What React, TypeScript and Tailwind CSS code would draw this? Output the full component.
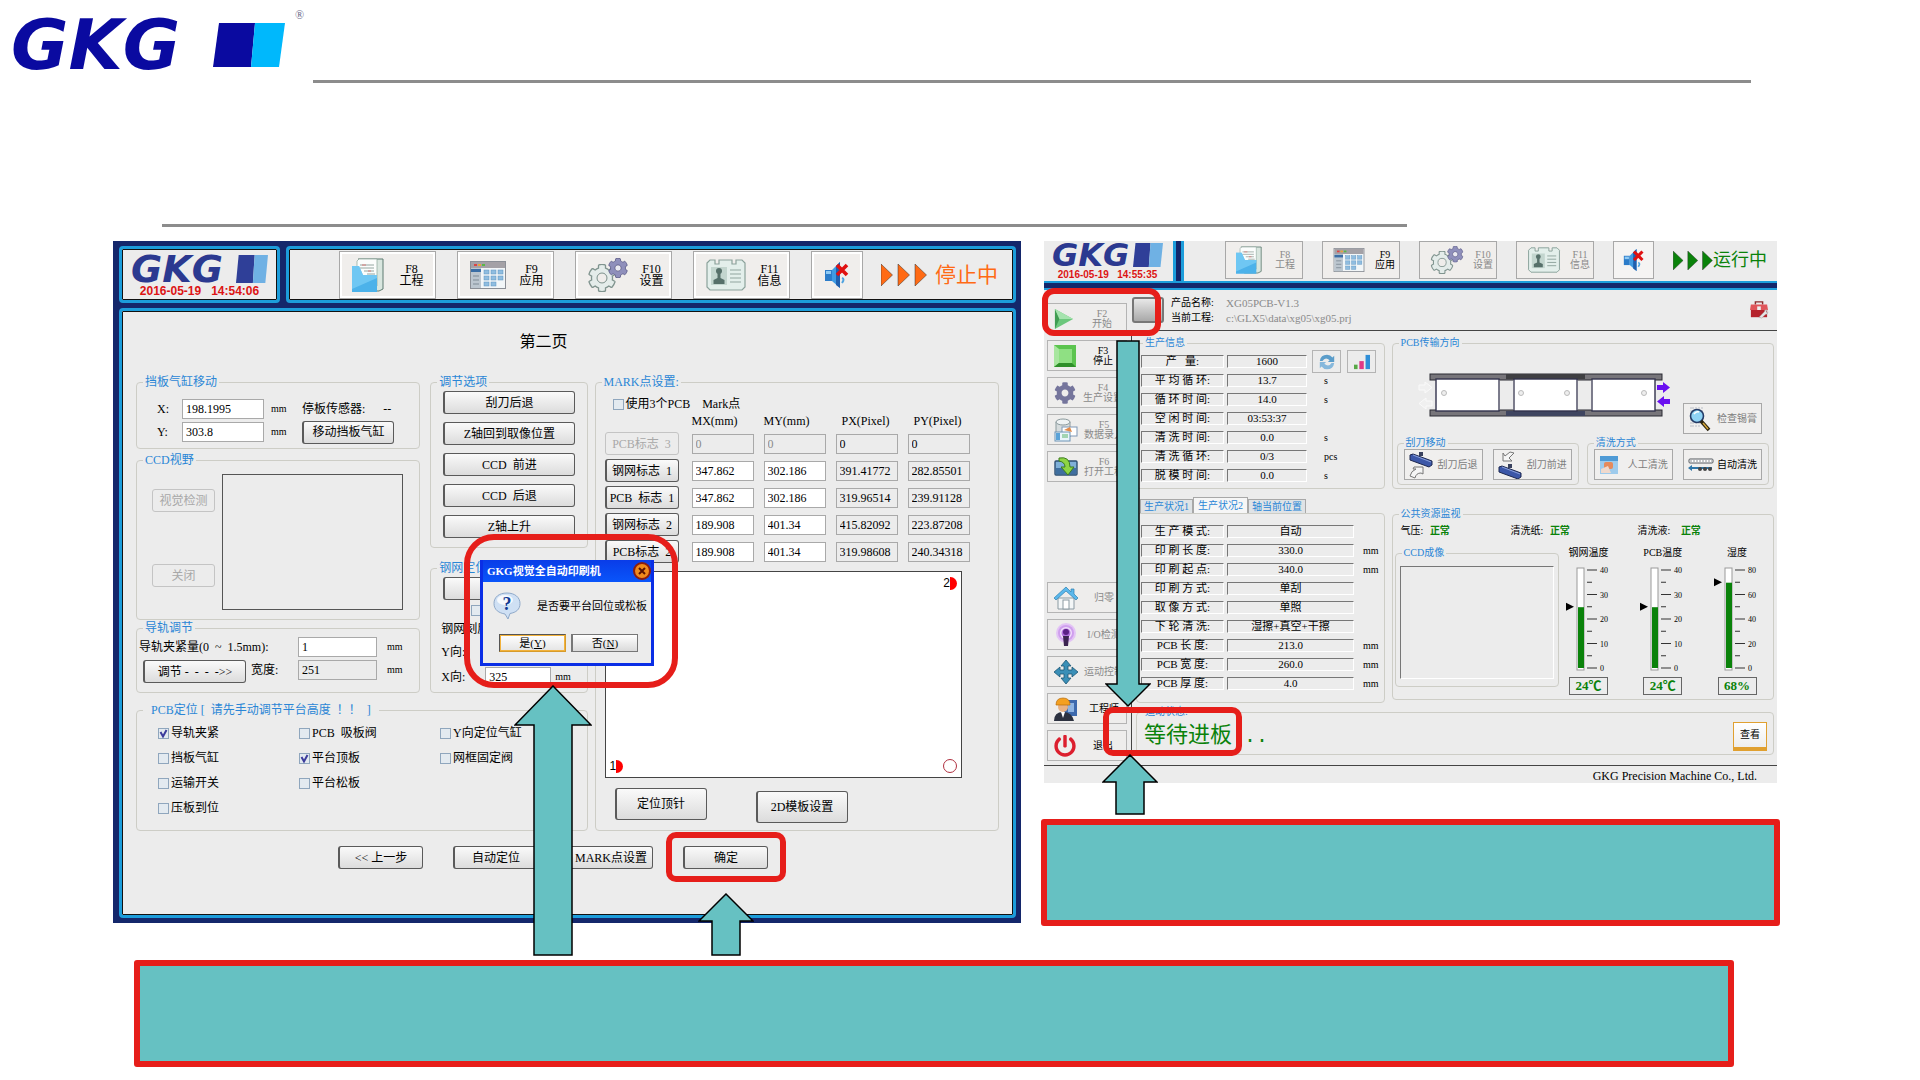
import { useState } from "react"
import type { ReactNode } from "react"
import { FaCog, FaPowerOff } from "react-icons/fa"

const serif = "font-['Liberation_Serif','Noto_Sans_CJK_SC',serif]"

/* ---------- icons ---------- */

function FolderIcon({ className }: { className: string }) {
  return (
    <svg viewBox="0 0 32 34" className={className}>
      <path d="M6 1h25v30l-4 2H10V5z" fill="#d9e6df" stroke="#5c7a70" />
      <path d="M5 3l2-2h18v27H5z" fill="#fbfdfc" stroke="#8aa39a" strokeWidth=".7" />
      <path d="M8 7h14M8 10h14M12 13h10M15 16h8M15 19h8" stroke="#7c8f8a" strokeWidth=".8" />
      <path d="M10 7h4M16 13h3" stroke="#d66" strokeWidth=".8" />
      <path d="M0 8h7l4 9h14v17H0z" fill="#4cb2ea" />
      <path d="M0 8h7l4 9h14v3L0 31z" fill="#7fd0f7" opacity=".7" />
    </svg>
  )
}

function WindowIcon({ className }: { className: string }) {
  return (
    <svg viewBox="0 0 36 28" className={className}>
      <rect x=".5" y=".5" width="35" height="27" fill="#f2f6f8" stroke="#8b8f96" />
      <rect x="1" y="1" width="34" height="6" fill="#a4a1a6" />
      <path d="M4 4h3" stroke="#d44" strokeWidth="2" />
      <path d="M8 4h3" stroke="#e8a33c" strokeWidth="2" />
      <path d="M12 4h3" stroke="#58b947" strokeWidth="2" />
      <rect x="1" y="7" width="10" height="20" fill="#bcc6cf" />
      <rect x="1" y="8" width="10" height="3" fill="#3b6ea5" />
      <path d="M3 15h6M3 19h6M3 23h6" stroke="#7f8b96" />
      {[14, 21, 28].map((x) =>
        [9, 15, 21].map((y) =>
          x === 28 && y === 21 ? null : (
            <rect key={`${x}-${y}`} x={x} y={y} width="5" height="4" fill="#8fbde0" stroke="#5d93bf" strokeWidth=".5" />
          )
        )
      )}
    </svg>
  )
}

function GearsIcon({ className }: { className: string }) {
  return (
    <svg viewBox="0 0 40 34" className={className}>
      <FaCog x="0" y="6" size={28} fill="#e4ecea" stroke="#80948f" strokeWidth="24" />
      <circle cx="14" cy="20" r="5" fill="#efedeb" stroke="#80948f" />
      <FaCog x="20" y="0" size={20} fill="#8f8fbb" stroke="#5b5b86" strokeWidth="20" />
      <circle cx="30" cy="10" r="2" fill="#e8e8f4" />
    </svg>
  )
}

function CardIcon({ className }: { className: string }) {
  return (
    <svg viewBox="0 0 40 32" className={className}>
      <path d="M1 4l3-3h5v4h4V1h13v4h4V1h6l3 3v24l-3 3H4l-3-3z" fill="#e3efeb" stroke="#8ba29b" strokeWidth="1.2" />
      <rect x="5" y="8" width="16" height="18" fill="#c3d6cf" />
      <circle cx="13" cy="12" r="3" fill="#56706a" />
      <path d="M11.500 14h3v5l4 2v4h-11v-4l4-2z" fill="#56706a" />
      <path d="M24 11h11M24 15h11M24 19h11M24 23h11" stroke="#91a69f" strokeWidth="1.2" />
    </svg>
  )
}

function MuteIcon({ className }: { className: string }) {
  return (
    <svg viewBox="0 0 26 28" className={className}>
      <path d="M1 9h7v11H1z" fill="#2c7cc9" />
      <path d="M8 9l8-8v26l-8-7z" fill="#3f9be3" />
      <path d="M12 5l4-4v26l-4-3z" fill="#1f5fae" />
      <path d="M2 10h5v3H2z" fill="#8fcaf4" />
      <path d="M18 17q3 1 0 5" stroke="#4fa3e0" strokeWidth="2" fill="none" />
      <path d="M13 4l10 10M23 4L13 14" stroke="#e01010" strokeWidth="3.600" />
    </svg>
  )
}

function PlayIcon() {
  return (
    <svg viewBox="0 0 22 24" className="h-6 w-5">
      <path d="M1 1l20 11L1 23z" fill="#6cc77c" />
      <path d="M1 1l5 11-5 11z" fill="#3f9c52" />
      <path d="M1 1l20 11H6z" fill="#a5e3ae" />
    </svg>
  )
}

function StopIcon() {
  return (
    <svg viewBox="0 0 22 22" className="size-[22px]">
      <rect width="22" height="22" fill="#5cc44f" />
      <path d="M0 0l5 4v14l-5 4z" fill="#a8e69f" />
      <path d="M0 22l5-4h13l4 4z" fill="#2f8f2a" />
      <path d="M5 4h13v14H5z" fill="#8fe083" />
    </svg>
  )
}

function DataIcon() {
  return (
    <svg viewBox="0 0 24 24" className="size-6">
      <path d="M2 4v15q6 4 14 0V4z" fill="#d6dcdd" stroke="#8b9a9d" />
      <ellipse cx="9" cy="4" rx="7" ry="3" fill="#eef2f3" stroke="#8b9a9d" />
      <rect x="8" y="9" width="15" height="9" fill="#fff" stroke="#7f97b5" />
      <rect x="1" y="14" width="15" height="9" fill="#eaf5fb" stroke="#6d94b6" />
      <rect x="2" y="15" width="4" height="7" fill="#5ba3d8" />
      <path d="M10 12l6-3 2 5z" fill="#e08a4a" />
      <path d="M8 17h6M8 19h6" stroke="#5bb36a" />
    </svg>
  )
}

function OpenIcon() {
  return (
    <svg viewBox="0 0 24 22" className="h-[22px] w-6">
      <rect x="1" y="5" width="22" height="14" rx="1" fill="#7fb0d8" stroke="#2d4f73" strokeWidth="1.4" />
      <path d="M2 12h20v6H2z" fill="#3f6fa0" />
      <path d="M5 2q11-2 11 9h4l-6 8-7-8h4q0-5-6-6z" fill="#8ed544" stroke="#3c7d1c" />
    </svg>
  )
}

function HomeIcon() {
  return (
    <svg viewBox="0 0 24 24" className="size-6">
      <path d="M4 12h16v11H4z" fill="#f3f6f7" stroke="#8b9aa2" />
      <path d="M12 1L0 12l2 2L12 5l10 9 2-2-4-4V3h-3v3z" fill="#5bb8ec" stroke="#2b7fb2" strokeWidth=".7" />
      <rect x="9" y="14" width="6" height="9" fill="#fff" stroke="#8b9aa2" />
    </svg>
  )
}

function IoIcon() {
  return (
    <svg viewBox="0 0 24 24" className="size-6">
      <circle cx="12" cy="10" r="10" fill="#e3c4f5" />
      <circle cx="12" cy="10" r="8" fill="#cf9fee" />
      <circle cx="12" cy="10" r="6" fill="#f0e0fa" />
      <circle cx="12" cy="10" r="4.500" fill="#b06fdc" />
      <circle cx="12" cy="9" r="3" fill="#5b1f86" />
      <path d="M9 13h6l-1 10h-4z" fill="#3b2350" />
    </svg>
  )
}

function MoveIcon() {
  return (
    <svg viewBox="0 0 24 24" className="size-6">
      <path
        d="M12 0l5 6h-3v4h4V7l6 5-6 5v-3h-4v4h3l-5 6-5-6h3v-4H6v3l-6-5 6-5v3h4V6H7z"
        fill="#3a8fb7"
        stroke="#1c5673"
        strokeWidth=".8"
      />
    </svg>
  )
}

function EngineerIcon() {
  return (
    <svg viewBox="0 0 24 24" className="size-6">
      <rect x="10" y="3" width="13" height="16" fill="#3d69ad" />
      <path d="M14 6h6v9h-6z" fill="#8eb4e2" />
      <circle cx="9" cy="10" r="5" fill="#e9b284" />
      <path d="M2 8q0-7 7-7t7 7z" fill="#f4a020" stroke="#b86c0a" strokeWidth=".7" />
      <path d="M0 24q0-9 9-9t11 9z" fill="#2c3140" />
      <path d="M7 15l2 6 2-6z" fill="#fff" />
    </svg>
  )
}

function RefreshIcon() {
  return (
    <svg viewBox="0 0 20 20" className="size-[18px]">
      <path d="M2 9q1-7 8-7 4 0 6 3l2-2v7h-7l2-2q-5-4-8 1z" fill="#5b9dca" />
      <path d="M18 11q-1 7-8 7-4 0-6-3l-2 2v-7h7l-2 2q5 4 8-1z" fill="#86b8dc" />
    </svg>
  )
}

function ChartIcon() {
  return (
    <svg viewBox="0 0 20 18" className="h-4 w-[18px]">
      <rect x="1" y="12" width="4" height="5" fill="#58a846" />
      <rect x="7" y="8" width="5" height="9" fill="#df3a86" />
      <rect x="14" y="1" width="5" height="16" fill="#2f8fd8" />
    </svg>
  )
}

function MagnifierIcon() {
  return (
    <svg viewBox="0 0 24 26" className="h-[26px] w-6">
      <path d="M3 1v20M5 1v20M8 1v20M11 1v20M14 1v12" stroke="#b9bec6" strokeDasharray="2 1" />
      <circle cx="9" cy="10" r="6.500" fill="#8fd3f5" stroke="#243b66" strokeWidth="1.600" />
      <path d="M6 8q2-3 5-2" stroke="#fff" strokeWidth="1.600" fill="none" />
      <path d="M13 15l8 9" stroke="#2b230f" strokeWidth="3.600" />
      <path d="M15 17l5 6" stroke="#d8a93a" strokeWidth="1.400" />
    </svg>
  )
}

function BladeIcon({ forward }: { forward?: boolean }) {
  return (
    <svg viewBox="0 0 24 28" className="h-7 w-6 shrink-0">
      <g transform={forward ? "translate(0 12)" : undefined}>
        <path d="M1 4l3-1 19 7v4l-3 2L1 9z" fill="#3c57a8" stroke="#1d2850" />
        <path d="M4 4l18 7" stroke="#8aa0dc" />
        <path d="M10 1h4v4h-4z" fill="#39415e" />
      </g>
      <path
        d={forward ? "M16 2l-5 5 3 3H5V2l2 3 5-4z" : "M1 25q1-5 6-7H4l1-2h9v7l-2-1q-5 0-6 5z"}
        fill="#f5f5f5"
        stroke="#777"
      />
    </svg>
  )
}

function WipeIcon() {
  return (
    <svg viewBox="0 0 20 20" className="size-5 shrink-0">
      <rect x="1" y="1" width="18" height="18" fill="#9ecbec" />
      <path d="M1 1h18v5H1z" fill="#4f9bd6" />
      <rect x="5" y="7" width="9" height="7" rx="2" fill="#e58a5c" />
      <path d="M2 14l7-3 3 7H2z" fill="#f0d9cc" />
    </svg>
  )
}

function AutoCleanIcon() {
  return (
    <svg viewBox="0 0 26 14" className="h-[14px] w-[26px] shrink-0">
      <rect x="1" y="1" width="24" height="4" rx="1" fill="#fff" stroke="#55595f" />
      <path d="M2 3h22" stroke="#8d9095" strokeDasharray="2 1" />
      <path d="M0 10l4-3v2h20v2H4v2z" fill="#2f76a8" />
      <circle cx="12" cy="11" r="2" fill="#444" />
      <circle cx="17" cy="11" r="2" fill="#444" />
      <circle cx="22" cy="11" r="2" fill="#444" />
    </svg>
  )
}

function ToolboxIcon() {
  return (
    <svg viewBox="0 0 20 20" className="h-[18px] w-5">
      <path d="M6 4V1h8v3" fill="none" stroke="#8b2b2b" strokeWidth="1.600" />
      <path d="M1 4h18l1 6H0z" fill="#e0555a" />
      <path d="M1 10h18v8H1z" fill="#b5232c" />
      <rect x="8" y="6" width="4" height="4" fill="#eee" />
      <path d="M10 18l6-6q0-3 3-2l-1 2 1 1 1-1q0 3-3 3l-4 4z" fill="#e6e6e6" stroke="#999" strokeWidth=".5" />
    </svg>
  )
}

function QuestionIcon() {
  return (
    <svg viewBox="0 0 28 28" className="size-7">
      <path d="M14 1C6 1 1 5 1 11.500S6 21 12 22l3 5 2-5.500c6-1 10-4 10-10S22 1 14 1z" fill="#cfe0f4" stroke="#8fa9c9" />
      <ellipse cx="12" cy="8" rx="8" ry="5" fill="#fff" opacity=".8" />
      <text x="14" y="18" textAnchor="middle" fontSize="18" fontWeight="700" fontFamily="Liberation Serif" fill="#123a93">
        ?
      </text>
    </svg>
  )
}

/* ---------- shared pieces ---------- */

function Brand({ size }: { size: "lg" | "md" | "sm" }) {
  const text = { lg: "text-[70px] leading-[46px]", md: "text-[38px] leading-[30px]", sm: "text-[32px] leading-[28px]" }[size]
  const mark = { lg: "h-11 w-[72px]", md: "h-7 w-8", sm: "h-6 w-[30px]" }[size]
  const color = size === "lg" ? "text-[#0a0aa0]" : "text-[#2b3990]"
  return (
    <div className={`flex items-center justify-between ${color}`}>
      <span className={`font-['DejaVu_Sans',sans-serif] font-bold italic ${text}`}>GKG</span>
      <svg viewBox="0 0 72 44" preserveAspectRatio="none" className={mark}>
        <path d="M6 0h36l-4 44H0z" fill={size === "lg" ? "#0a0aa0" : "#2f3f98"} />
        <path d="M42 0h30l-6 44H38z" fill={size === "lg" ? "#00b8fc" : "#6fb1e4"} />
      </svg>
    </div>
  )
}

function Group({ title, className = "", body = "", children }: { title: string; className?: string; body?: string; children: ReactNode }) {
  return (
    <fieldset className={`min-w-0 rounded-[4px] border border-[#cdcdc6] ${className}`}>
      <legend className="ml-1.5 px-0.5 whitespace-pre text-[#2a86d6]">{title}</legend>
      <div className={body}>{children}</div>
    </fieldset>
  )
}

function PushButton({ className = "", disabled, children }: { className?: string; disabled?: boolean; children?: ReactNode }) {
  const look = disabled
    ? "border-[#c4c4c4] text-[#a8a8a8]"
    : "border-[#5a5a5a] border-l-2 bg-linear-to-b from-[#fafafa] to-[#dcdcdc] text-black"
  return (
    <button
      disabled={disabled}
      className={`flex items-center justify-center rounded-[3px] border whitespace-pre ${look} ${className}`}
    >
      {children}
    </button>
  )
}

function Field({ label, value, className = "", readOnly }: { label: string; value: string; className?: string; readOnly?: boolean }) {
  return (
    <input
      aria-label={label}
      defaultValue={value}
      readOnly={readOnly}
      className={`h-5 min-w-0 border border-[#a9a9a9] px-[3px] ${readOnly ? "bg-[#ececec]" : "bg-white"} ${className}`}
    />
  )
}

function Check({ label, on }: { label: string; on?: boolean }) {
  return (
    <label className="flex items-center gap-0.5 whitespace-pre">
      <span className="relative flex size-[11px]">
        <input
          type="checkbox"
          defaultChecked={on}
          className="peer size-[11px] appearance-none border border-[#8fa6bd] bg-[#e3eaf0]"
        />
        <svg viewBox="0 0 11 11" className="pointer-events-none absolute inset-0 hidden peer-checked:block">
          <path d="M2.500 4l2.500 4.500L8.500 2" fill="none" stroke="#3c3c9c" strokeWidth="2" />
        </svg>
      </span>
      {label}
    </label>
  )
}

function ToolButton({ fkey, label, small, dim, children }: { fkey: string; label: string; small?: boolean; dim?: boolean; children: ReactNode }) {
  return (
    <button
      className={`flex shrink-0 items-center bg-[#f0eeec] ${
        small
          ? "h-[38px] w-[78px] border border-[#a8a8a8] pl-2.5 text-[10px] leading-[10px]"
          : "h-[46px] w-[95px] border-2 border-white pl-2.5 text-[12px] leading-[12px] outline outline-[#a8a8a8]"
      } ${dim ? "text-[#8a8a8a]" : "text-black"}`}
    >
      {children}
      <span className="flex-1 pl-1.5 text-center">
        {fkey}
        <br />
        {label}
      </span>
    </button>
  )
}

function Runner({ color, className }: { color: string; className: string }) {
  return (
    <svg viewBox="0 0 46 22" className={className}>
      {[0, 17, 34].map((x) => (
        <path key={x} d={`M${x} 0l11.500 11L${x} 22z`} fill={color} stroke="#333" strokeWidth=".5" />
      ))}
    </svg>
  )
}

function UpArrow({ className, width, height, head, inset }: { className: string; width: number; height: number; head: number; inset: number }) {
  return (
    <svg width={width} height={height} className={`absolute ${className}`}>
      <path
        d={`M${width / 2} 1L${width - 1} ${head}H${width - inset}V${height - 1}H${inset}V${head}H1z`}
        fill="#66c1c2"
        stroke="#000"
        strokeWidth="1.500"
      />
    </svg>
  )
}

/* ---------- left screen ---------- */

const frame = "rounded-[4px] border-3 border-[#1c9ddb] bg-[#ececec] outline-1 -outline-offset-4 outline-[#111]"

const marks = [
  { name: "PCB标志  3", values: ["0", "0", "0", "0"], off: true },
  { name: "钢网标志  1", values: ["347.862", "302.186", "391.41772", "282.85501"] },
  { name: "PCB  标志  1", values: ["347.862", "302.186", "319.96514", "239.91128"] },
  { name: "钢网标志  2", values: ["189.908", "401.34", "415.82092", "223.87208"] },
  { name: "PCB标志  2", values: ["189.908", "401.34", "319.98608", "240.34318"] },
]

function MarkGroup() {
  return (
    <Group title="MARK点设置:" body="pb-[7px] pl-[9px]">
      <div className="pt-2 pl-2">
        <Check label="使用3个PCB    Mark点" />
      </div>
      <div className="mt-[3px] grid grid-cols-[77px_62px_62px_62px_62px] gap-x-2.5 gap-y-1">
        <div className="contents">
          <span />
          <span>MX(mm)</span>
          <span>MY(mm)</span>
          <span className="pl-1.5">PX(Pixel)</span>
          <span className="pl-1.5">PY(Pixel)</span>
        </div>
        {marks.map((m) => (
          <div key={m.name} className="contents">
            <PushButton disabled={m.off} className="h-[23px] w-[74px]">
              {m.name}
            </PushButton>
            {m.values.map((v, i) => (
              <Field
                key={i}
                label={`${m.name} ${i + 1}`}
                value={v}
                readOnly={m.off || i > 1}
                className={`mt-0.5 w-[62px] ${m.off && i < 2 ? "text-[#8a8a8a]" : ""}`}
              />
            ))}
          </div>
        ))}
      </div>
      <div className="mt-2 mr-9 flex h-[207px] flex-col justify-between border border-[#444] bg-white px-1 py-1 font-['Liberation_Sans',sans-serif]">
        <div className="flex items-center justify-end">
          2
          <span className="h-[13px] w-[7px] rounded-r-full bg-[#ff0000]" />
        </div>
        <div className="flex items-center">
          1
          <span className="h-[13px] w-[7px] rounded-r-full bg-[#ff0000]" />
          <span className="ml-auto size-[14px] rounded-full border border-[#b03040]" />
        </div>
      </div>
      <div className="mt-2.5 flex items-end gap-[49px] pl-2.5">
        <PushButton className="mb-[3px] h-8 w-[92px]">定位顶针</PushButton>
        <PushButton className="h-8 w-[92px]">2D模板设置</PushButton>
      </div>
    </Group>
  )
}

function ConfirmDialog() {
  return (
    <div role="dialog" aria-label="GKG视觉全自动印刷机" className="absolute top-[319px] left-[367px] w-[174px] border-[3px] border-t-0 border-[#0a2ee6] bg-[#ececec] text-[11px]">
      <div className="flex h-[22px] items-center justify-between bg-linear-to-b from-[#0a3ce8] to-[#0a55fa] pl-1 font-bold text-white">
        GKG视觉全自动印刷机
        <button aria-label="关闭" className="flex size-[18px] items-center justify-center rounded-full border-2 border-[#8a1d10] bg-[#f08a1c]">
          <svg viewBox="0 0 8 8" className="size-2">
            <path d="M1 1l6 6M7 1L1 7" stroke="#5a1200" strokeWidth="2" />
          </svg>
        </button>
      </div>
      <div className="flex items-center justify-between pt-2.5 pr-1 pl-2.5">
        <QuestionIcon />
        <span className="whitespace-nowrap">是否要平台回位或松板</span>
      </div>
      <div className="mt-3.5 mb-[11px] flex gap-[5px] pl-4">
        <button className="h-[18px] w-[67px] border border-t-[#555] border-l-[#555] border-[#d79b2b] bg-linear-to-b from-white to-[#e4e4e4] leading-none outline-1 -outline-offset-2 outline-[#f2b23c]">
          是(<u>Y</u>)
        </button>
        <button className="h-[18px] w-[67px] border border-l-2 border-[#777] bg-linear-to-b from-white to-[#dadada] leading-none">
          否(<u>N</u>)
        </button>
      </div>
    </div>
  )
}

function SetupScreen() {
  return (
    <section className="relative bg-[#14276b] pt-[5px] pr-[5px] pb-[5px] pl-1.5 text-[12px] leading-[14px]">
      <div className="flex gap-1.5">
        <div className={`h-[57px] w-[161px] px-[9px] pt-[5px] ${frame}`}>
          <Brand size="md" />
          <p className="text-center font-['Liberation_Sans',sans-serif] text-[12px] leading-[14px] font-bold whitespace-pre text-[#dc1414]">
            2016-05-19   14:54:06
          </p>
        </div>
        <div className={`flex h-[57px] flex-1 items-center gap-[23px] pl-[51px] ${frame}`}>
          <ToolButton fkey="F8" label="工程"><FolderIcon className="h-[34px] w-8" /></ToolButton>
          <ToolButton fkey="F9" label="应用"><WindowIcon className="h-7 w-9" /></ToolButton>
          <ToolButton fkey="F10" label="设置"><GearsIcon className="h-[34px] w-10" /></ToolButton>
          <ToolButton fkey="F11" label="信息"><CardIcon className="h-8 w-10" /></ToolButton>
          <button aria-label="静音" className="flex h-[46px] w-[50px] shrink-0 items-center justify-center border-2 border-white bg-[#f0eeec] outline outline-[#a8a8a8]">
            <MuteIcon className="h-7 w-[26px]" />
          </button>
          <div className="-ml-1 flex items-center gap-2 text-[21px] text-[#ff6a14]">
            <Runner color="#ff6a14" className="h-[22px] w-[46px]" />
            停止中
          </div>
        </div>
      </div>

      <div className={`mt-[5px] pr-[14px] pb-[46px] pl-[14px] ${frame}`}>
        <h1 className="mt-[23px] mb-[25px] pr-12 text-center text-[16px] leading-4">第二页</h1>
        <div className="grid grid-cols-[451fr_404fr] gap-[7px]">
          <div>
            <div className="grid grid-cols-[284fr_157fr] gap-2.5">
              <div>
                <Group title="挡板气缸移动" body="pt-2.5 pb-1.5">
                  <div className="flex items-center">
                    <span className="w-[45px] pl-5">X:</span>
                    <Field label="X" value="198.1995" className="w-[82px]" />
                    <span className="w-[38px] pl-[7px] text-[10px]">mm</span>
                    <span className="whitespace-pre">停板传感器:      --</span>
                  </div>
                  <div className="mt-[3px] flex h-5 items-center">
                    <span className="w-[45px] pl-5">Y:</span>
                    <Field label="Y" value="303.8" className="w-[82px]" />
                    <span className="w-[38px] pl-[7px] text-[10px]">mm</span>
                    <PushButton className="h-[23px] w-[92px]">移动挡板气缸</PushButton>
                  </div>
                </Group>

                <Group title="CCD视野" className="mt-1" body="flex gap-[7px] pt-[7px] pr-4 pb-[9px] pl-[15px]">
                  <div className="flex flex-col gap-[52px] pt-[15px]">
                    <PushButton disabled className="h-[23px] w-[63px]">视觉检测</PushButton>
                    <PushButton disabled className="h-[23px] w-[63px]">关闭</PushButton>
                  </div>
                  <div className="h-[136px] flex-1 border border-[#555]" />
                </Group>

                <Group title="导轨调节" className="mt-px" body="pt-0.5 pb-[9px]">
                  <div className="flex items-center">
                    <span className="w-[161px] pl-0.5 whitespace-pre">导轨夹紧量(0  ~  1.5mm):</span>
                    <Field label="导轨夹紧量" value="1" className="w-[79px]" />
                    <span className="pl-2.5 text-[10px]">mm</span>
                  </div>
                  <div className="mt-[3px] flex items-start pl-1.5">
                    <PushButton className="h-[23px] w-[103px]">调节 -  -  -  -&gt;&gt;</PushButton>
                    <span className="w-[52px] pt-[3px] pl-[5px]">宽度:</span>
                    <Field label="宽度" value="251" readOnly className="w-[79px]" />
                    <span className="pt-[3px] pl-2.5 text-[10px]">mm</span>
                  </div>
                </Group>
              </div>

              <div>
                <Group title="调节选项" body="flex flex-col gap-2 px-3 pt-0.5 pb-[9px]">
                  <PushButton className="h-[23px]">刮刀后退</PushButton>
                  <PushButton className="h-[23px]">Z轴回到取像位置</PushButton>
                  <PushButton className="h-[23px]">CCD  前进</PushButton>
                  <PushButton className="h-[23px]">CCD  后退</PushButton>
                  <PushButton className="h-[23px]">Z轴上升</PushButton>
                </Group>
                <Group title="钢网定位" className="mt-[13px]" body="px-3 pt-0.5 pb-[5px]">
                  <PushButton className="h-[23px] w-full" />
                  <div className="flex h-5 items-center pl-7">
                    <Check label="" />
                  </div>
                  <p className="-ml-0.5 h-[18px] leading-[18px]">钢网刻度</p>
                  <div className="mt-1 -ml-0.5 flex h-5 items-center">
                    <span className="w-11">Y向:</span>
                  </div>
                  <div className="mt-[5px] -ml-0.5 flex items-center">
                    <span className="w-11">X向:</span>
                    <Field label="X向" value="325" className="w-[66px]" />
                    <span className="pl-1 text-[10px]">mm</span>
                  </div>
                </Group>
              </div>
            </div>

            <Group title="  PCB定位 [  请先手动调节平台高度  ！！  ]  " className="mt-2.5" body="pt-1 pb-2.5 pl-[21px]">
              <div className="grid grid-flow-col grid-cols-[141px_141px_1fr] grid-rows-[repeat(4,24px)] gap-y-px">
                <Check label="导轨夹紧" on />
                <Check label="挡板气缸" />
                <Check label="运输开关" />
                <Check label="压板到位" />
                <Check label="PCB  吸板阀" />
                <Check label="平台顶板" on />
                <Check label="平台松板" />
                <span />
                <Check label="Y向定位气缸" />
                <Check label="网框固定阀" />
              </div>
            </Group>
          </div>
          <MarkGroup />
        </div>
        <div className="mt-[15px] flex gap-[30px] pl-[202px]">
          <PushButton className="h-[23px] w-[85px]">&lt;&lt; 上一步</PushButton>
          <PushButton className="h-[23px] w-[85px]">自动定位</PushButton>
          <PushButton className="h-[23px] w-[85px]">MARK点设置</PushButton>
          <PushButton className="h-[23px] w-[85px]">确定</PushButton>
        </div>
      </div>

      <ConfirmDialog />
      <div className="absolute top-[293px] left-[351px] h-[154px] w-[214px] rounded-[30px] border-6 border-[#e61e1a]" />
      <div className="absolute top-[591px] left-[553px] h-[50px] w-[120px] rounded-[10px] border-6 border-[#e61e1a]" />
      <UpArrow className="top-[444px] left-[401px]" width={78} height={271} head={40} inset={20} />
      <UpArrow className="top-[652px] left-[585px]" width={56} height={63} head={28} inset={14} />
    </section>
  )
}

/* ---------- right screen ---------- */

const production = [
  ["产   量:", "1600", ""],
  ["平 均 循 环:", "13.7", "s"],
  ["循 环 时 间:", "14.0", "s"],
  ["空 闲 时 间:", "03:53:37", ""],
  ["清 洗 时 间:", "0.0", "s"],
  ["清 洗 循 环:", "0/3", "pcs"],
  ["脱 模 时 间:", "0.0", "s"],
]

const status = [
  ["生 产 模 式:", "自动", ""],
  ["印 刷 长 度:", "330.0", "mm"],
  ["印 刷 起 点:", "340.0", "mm"],
  ["印 刷 方 式:", "单刮", ""],
  ["取 像 方 式:", "单照", ""],
  ["下 轮 清 洗:", "湿擦+真空+干擦", ""],
  ["PCB 长 度:", "213.0", "mm"],
  ["PCB 宽 度:", "260.0", "mm"],
  ["PCB 厚 度:", "4.0", "mm"],
]

const cell = "h-[13px] border border-t-[#777] border-l-[#777] border-r-white border-b-white p-0 text-center whitespace-pre"

function SideButton({ fkey, label, dim, children }: { fkey?: string; label: string; dim?: boolean; children: ReactNode }) {
  return (
    <button className={`flex h-[31px] w-20 items-center border border-[#b4b4b4] bg-[#eeedec] pl-1.5 text-[10px] leading-[10px] ${dim ? "text-[#8a8a8a]" : "text-black"}`}>
      {children}
      <span className="flex-1 pl-1 text-center whitespace-nowrap">
        {fkey}
        {fkey && <br />}
        {label}
      </span>
    </button>
  )
}

function ActionButton({ label, dim, children }: { label: string; dim?: boolean; children: ReactNode }) {
  return (
    <button className={`flex h-[31px] w-[79px] shrink-0 items-center justify-between border border-[#a8a8a8] bg-[#f0efee] px-1 whitespace-nowrap ${dim ? "text-[#7d7d7d]" : "text-black"}`}>
      {children}
      {label}
    </button>
  )
}

function RailDrawing() {
  return (
    <svg viewBox="0 0 252 44" className="h-11 w-[252px]">
      <rect x="12" y="1" width="232" height="6" fill="#77757a" stroke="#2a2a33" />
      <rect x="12" y="37" width="232" height="6" fill="#77757a" stroke="#2a2a33" />
      <rect x="88" y="1" width="79" height="5" fill="#3f3f42" />
      <rect x="88" y="38" width="79" height="5" fill="#3f4560" />
      {[18, 96, 174].map((x) => (
        <rect key={x} x={x} y="6" width="63" height="32" fill="#fff" stroke="#33334d" strokeWidth="1.400" />
      ))}
      <path d="M81 7v30M96 7v30M159 7v30M174 7v30" stroke="#8c8c98" />
      {[26, 103, 149, 226].map((x) => (
        <circle key={x} cx={x} cy="20" r="2.500" fill="#eee" stroke="#bbb" />
      ))}
      <path d="M239 12h6v-3l7 5.500-7 5.500v-3h-6zM252 26h-6v-3l-7 5.500 7 5.500v-3h6z" fill="#6a10f0" />
      <path d="M1 12h6v-3l7 5.500-7 5.500v-3H1zM14 28H8v-3l-7 5.500 7 5.500v-3h6z" fill="#f0f0f0" stroke="#fafafa" />
    </svg>
  )
}

function Gauge({ title, max, value, pointer, unit }: { title: string; max: number; value: number; pointer: number; unit: string }) {
  const y = (v: number) => 101 - (v / max) * 98
  const ticks = [0, 1, 2, 3, 4, 5, 6, 7, 8]
  return (
    <div className="flex w-[60px] flex-col items-center">
      <span className="whitespace-nowrap">{title}</span>
      <svg viewBox="0 0 48 110" className="mt-2 h-[110px] w-12">
        <rect x="12" y="1" width="7" height="102" fill="#fff" stroke="#999" />
        <rect x="13" y={y(value) - 2} width="6" height={103 - y(value)} fill="#0a820a" />
        <path d={`M1 ${y(pointer) - 4}l8 4-8 4z`} fill="#000" />
        {ticks.map((t) => (
          <g key={t}>
            <path d={`M22 ${y((t * max) / 8)}h${t % 2 ? 5 : 10}`} stroke="#333" />
            {t % 2 === 0 && (
              <text x="35" y={y((t * max) / 8) + 3} fontSize="8" fontFamily="Liberation Serif">
                {(t * max) / 8}
              </text>
            )}
          </g>
        ))}
      </svg>
      <output className="flex h-[18px] w-[39px] items-center justify-center border border-[#666] text-[13px] font-bold text-[#0a820a]">
        {value}
        {unit}
      </output>
    </div>
  )
}

function ReadoutTable({ rows, valueWidth, tools }: { rows: string[][]; valueWidth: string; tools?: ReactNode }) {
  return (
    <table className="border-separate border-spacing-x-[3px] border-spacing-y-[6px]">
      <tbody>
        {rows.map(([name, value, unit]) => (
          <tr key={name} className="text-[11px] leading-[11px]">
            <th className={`w-[83px] font-normal ${cell}`}>{name}</th>
            <td className={`${valueWidth} ${cell}`}>{value}</td>
            <td className="h-[13px] p-0 pl-1.5 text-[10px] leading-[11px]">
              {tools && name === rows[0][0] ? tools : <span className={unit === "mm" ? "" : "pl-2"}>{unit}</span>}
            </td>
          </tr>
        ))}
      </tbody>
    </table>
  )
}

function RunScreen() {
  const [tab, setTab] = useState("生产状况2")

  return (
    <section className="relative bg-[#ececec] text-[10px] leading-3">
      <header className="flex h-10">
        <div className="w-[129px] pr-2.5 pl-2">
          <Brand size="sm" />
          <p className="text-center font-['Liberation_Sans',sans-serif] text-[10px] leading-[11px] font-bold whitespace-pre text-[#dc1414]">
            2016-05-19   14:55:35
          </p>
        </div>
        <div className="w-[11px] border-x-3 border-[#1c9ddb] bg-[#14276b]" />
        <div className="flex flex-1 items-start gap-[19px] pl-[41px]">
          <ToolButton small dim fkey="F8" label="工程"><FolderIcon className="h-7 w-[26px]" /></ToolButton>
          <ToolButton small fkey="F9" label="应用"><WindowIcon className="h-6 w-8" /></ToolButton>
          <ToolButton small dim fkey="F10" label="设置"><GearsIcon className="h-7 w-[34px]" /></ToolButton>
          <ToolButton small dim fkey="F11" label="信息"><CardIcon className="h-[26px] w-[34px]" /></ToolButton>
          <button aria-label="静音" className="flex h-[38px] w-[41px] shrink-0 items-center justify-center border border-[#a8a8a8] bg-[#f5f4f3]">
            <MuteIcon className="h-6 w-[22px]" />
          </button>
          <div className="flex h-[38px] items-center text-[18px] whitespace-nowrap text-[#0a820a]">
            <Runner color="#0a820a" className="h-[19px] w-10" />
            运行中
          </div>
        </div>
      </header>
      <div className="h-[9px] border-y-2 border-[#1c9ddb] bg-[#14276b]" />

      <div className="flex border-b border-[#444]">
        <nav className="flex w-[87px] flex-col justify-between pt-[13px] pb-1 pl-[3px]">
          <div className="flex flex-col gap-1.5">
            <SideButton dim fkey="F2" label="开始"><PlayIcon /></SideButton>
            <SideButton fkey="F3" label="停止"><StopIcon /></SideButton>
            <SideButton dim fkey="F4" label="生产设置"><FaCog size={22} color="#75759c" /></SideButton>
            <SideButton dim fkey="F5" label="数据录入"><DataIcon /></SideButton>
            <SideButton dim fkey="F6" label="打开工程"><OpenIcon /></SideButton>
          </div>
          <div className="flex flex-col gap-1.5">
            <SideButton dim label="归零"><HomeIcon /></SideButton>
            <SideButton dim label="I/O检测"><IoIcon /></SideButton>
            <SideButton dim label="运动控制"><MoveIcon /></SideButton>
            <SideButton label="工程师"><EngineerIcon /></SideButton>
            <SideButton label="退出"><FaPowerOff size={22} color="#dc1f2e" /></SideButton>
          </div>
        </nav>

        <div className="min-w-0 flex-1">
          <div className="flex h-[41px] items-center border-b border-[#444] pr-2 pl-px">
            <button aria-label="停止" className="h-[26px] w-8 rounded-[3px] border-2 border-[#777] bg-linear-to-b from-[#e8e8e8] to-[#a9a9a9]" />
            <dl className="grid flex-1 grid-cols-[55px_1fr] gap-y-[3px] pl-[7px]">
              <dt>产品名称:</dt>
              <dd className="text-[11px] text-[#8a8a8a]">XG05PCB-V1.3</dd>
              <dt>当前工程:</dt>
              <dd className="text-[11px] text-[#8a8a8a]">c:\GLX5\data\xg05\xg05.prj</dd>
            </dl>
            <ToolboxIcon />
          </div>

          <div className="border-l border-[#444] pr-[3px] pb-2.5 pl-1">
            <div className="grid grid-cols-[249fr_383fr] gap-[7px] pt-1.5">
              <div>
                <Group title="生产信息" body="pl-px">
                  <ReadoutTable
                    rows={production}
                    valueWidth="w-[80px]"
                    tools={
                      <div className="-ml-1 flex h-[13px] items-center gap-1.5">
                        <button aria-label="刷新" className="flex h-[23px] w-[29px] items-center justify-center border border-[#b4b4b4]">
                          <RefreshIcon />
                        </button>
                        <button aria-label="统计" className="flex h-[23px] w-[29px] items-center justify-center border border-[#b4b4b4]">
                          <ChartIcon />
                        </button>
                      </div>
                    }
                  />
                </Group>
                <div role="tablist" className="mt-2 flex h-4 items-end pl-1">
                  {["生产状况1", "生产状况2", "轴当前位置"].map((t) => (
                    <button
                      key={t}
                      role="tab"
                      aria-selected={tab === t}
                      onClick={() => setTab(t)}
                      className={`border border-b-0 border-[#a8a8a8] text-[#2a86d6] ${
                        tab === t ? "h-4 bg-[#f6f6f6] px-1" : "h-[14px] bg-[#dfe3e6] px-[3px]"
                      }`}
                    >
                      {t}
                    </button>
                  ))}
                </div>
                <div className="rounded-[4px] border border-[#cdcdc6] pt-[5px] pb-1.5 pl-px">
                  <ReadoutTable rows={status} valueWidth="w-[127px]" />
                </div>
              </div>

              <div>
                <Group title="PCB传输方向" body="px-1 pb-[3px]">
                  <div className="flex h-[88px] items-end justify-between pr-[7px] pb-[3px] pl-[21px]">
                    <div className="mb-[17px]">
                      <RailDrawing />
                    </div>
                    <ActionButton dim label="检查锡膏"><MagnifierIcon /></ActionButton>
                  </div>
                  <div className="grid grid-cols-2 gap-2">
                    <Group title="刮刀移动" body="flex justify-between px-1.5 pb-1">
                      <ActionButton dim label="刮刀后退"><BladeIcon /></ActionButton>
                      <ActionButton dim label="刮刀前进"><BladeIcon forward /></ActionButton>
                    </Group>
                    <Group title="清洗方式" body="flex justify-between px-1.5 pb-1">
                      <ActionButton dim label="人工清洗"><WipeIcon /></ActionButton>
                      <ActionButton label="自动清洗"><AutoCleanIcon /></ActionButton>
                    </Group>
                  </div>
                </Group>

                <Group title="公共资源监视" className="mt-[19px]" body="pb-0.5 pl-0.5">
                  <div className="grid h-[22px] grid-cols-[110px_127px_1fr] items-center pl-1.5">
                    <span>气压: <b className="pl-1 text-[#0a820a]">正常</b></span>
                    <span>清洗纸: <b className="pl-1 text-[#0a820a]">正常</b></span>
                    <span>清洗液: <b className="pl-2 text-[#0a820a]">正常</b></span>
                  </div>
                  <div className="flex pt-[5px]">
                    <Group title="CCD成像" className="mb-2.5 w-[164px]" body="px-1 pt-[7px] pb-[7px]">
                      <div className="h-[113px] border border-t-[#777] border-l-[#777] border-r-white border-b-white" />
                    </Group>
                    <div className="flex flex-1 justify-between pr-1.5">
                      <Gauge title="钢网温度" max={40} value={24} pointer={25} unit="℃" />
                      <Gauge title="PCB温度" max={40} value={24} pointer={25} unit="℃" />
                      <Gauge title="湿度" max={80} value={68} pointer={70} unit="%" />
                    </div>
                  </div>
                </Group>
              </div>
            </div>

            <Group title="运动状态:" className="mt-[3px]">
              <div className="flex h-9 items-center justify-between pr-1.5 pl-[7px]">
                <p className="text-[22px] leading-6 text-[#0a820a]">
                  等待进板<span className="font-['Liberation_Mono',monospace] text-[20px]">...</span>
                </p>
                <button className="h-[29px] w-[34px] border border-b-4 border-[#e0a030] bg-linear-to-b from-white to-[#eee]">查看</button>
              </div>
            </Group>
          </div>
        </div>
      </div>
      <footer className="h-[17px] pr-5 text-right text-[12px] leading-[20px]">GKG Precision Machine Co., Ltd.</footer>

      <div className="absolute top-[47px] -left-0.5 h-12 w-[119px] rounded-[12px] border-6 border-[#e61e1a]" />
      <div className="absolute top-[466px] left-[59px] h-[49px] w-[139px] rounded-[10px] border-6 border-[#e61e1a]" />
      <svg width="46" height="368" className="absolute top-[99px] left-[61px]">
        <path d="M12 1H34V344H45L23 366L1 344H12z" fill="#66c1c2" stroke="#000" strokeWidth="1.500" />
      </svg>
      <UpArrow className="top-[513px] left-[58px]" width={56} height={61} head={28} inset={14} />
    </section>
  )
}

/* ---------- page ---------- */

export default function App() {
  return (
    <main className={`min-h-screen bg-white pb-[15px] text-black ${serif}`}>
      <header className="flex h-[83px] items-end">
        <div className="flex h-full w-[313px] items-start gap-2.5 pt-[22px] pl-[11px]">
          <div className="w-[274px]">
            <Brand size="lg" />
          </div>
          <span className="-mt-4 text-[12px] text-[#6a6a8a]">®</span>
        </div>
        <div className="mr-[169px] h-[3px] flex-1 bg-[#8c8c8c]" />
      </header>
      <div className="mt-[141px] mr-[513px] mb-[14px] ml-[162px] h-[3px] bg-[#8c8c8c]" />

      <div className="grid grid-cols-[908fr_733fr] items-start gap-[23px] pr-[143px] pl-[113px]">
        <SetupScreen />
        <div>
          <RunScreen />
          <div className="-mx-[3px] mt-9 h-[107px] rounded-[3px] border-6 border-[#e61e1a] bg-[#66c1c2]" />
        </div>
      </div>

      <div className="mt-[34px] mr-[186px] ml-[134px] h-[107px] rounded-[3px] border-6 border-[#e61e1a] bg-[#66c1c2]" />
    </main>
  )
}
